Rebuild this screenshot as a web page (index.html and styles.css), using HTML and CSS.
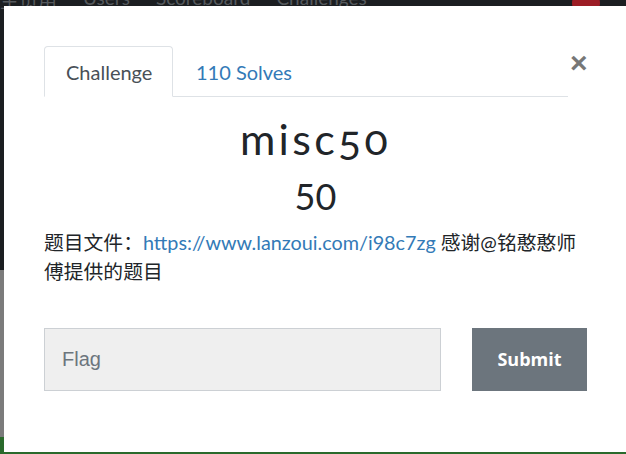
FILE: index.html
```html
<!DOCTYPE html>
<html>
<head>
<meta charset="utf-8">
<link rel="stylesheet" href="styles.css">
</head>
<body>
<div class="page">
  <div class="navbar">
    <span class="nav-item">主页用</span>
    <span class="nav-item">Users</span>
    <span class="nav-item">Scoreboard</span>
    <span class="nav-item">Challenges</span>
    <span class="nav-spacer"></span>
    <span class="badge"></span>
  </div>
  <div class="dark-area"></div>
  <div class="gray-area"></div>
  <div class="green-area"></div>
</div>

<div class="modal">
  <div class="modal-body">
    <div class="header">
      <div class="tabs">
        <div class="tab active">Challenge</div>
        <div class="tab link">110 Solves</div>
      </div>
      <div class="close">&times;</div>
    </div>
    <h3 class="title">misc50</h3>
    <h4 class="value">50</h4>
    <p class="desc">题目文件：<a class="link-text">https://www.lanzoui.com/i98c7zg</a> 感谢@铭憨憨师傅提供的题目</p>
    <div class="form">
      <div class="input">Flag</div>
      <div class="submit">Submit</div>
    </div>
  </div>
</div>
</body>
</html>
```
FILE: styles.css
```css
html, body {
  margin: 0;
  padding: 0;
  width: 626px;
  height: 454px;
  overflow: hidden;
}
body {
  background: #1b1e21;
  font-family: "Lato", "Noto Sans CJK SC", sans-serif;
  position: relative;
}
.page {
  display: flex;
  flex-direction: column;
  height: 454px;
}
.navbar {
  height: 30px;
  display: flex;
  align-items: flex-start;
  gap: 26px;
  margin-top: -14px;
  font-size: 19px;
  color: #55595d;
}
.nav-spacer { flex: 1; }
.badge {
  width: 28px;
  height: 22px;
  border-radius: 11px;
  background: #9c1d25;
  margin-top: 6px;
  margin-right: 26px;
}
.dark-area {
  height: 254px;
  background: #1b1e21;
}
.gray-area {
  height: 167px;
  background: #7b7b7b;
}
.green-area {
  flex: 1;
  background: #2a6a2c;
}

.modal {
  position: absolute;
  left: 4px;
  top: 6px;
  width: 640px;
  height: 446px;
  background: #fff;
}
.modal-body {
  width: 543px;
  padding: 40px 0 0 40px;
}
.header {
  display: flex;
  align-items: flex-start;
}
.tabs {
  width: 524px;
  height: 51px;
  box-sizing: border-box;
  border-bottom: 1px solid #dee2e6;
  display: flex;
}
.tab {
  height: 51px;
  box-sizing: border-box;
  padding: 12px 21px 0 21px;
  font-size: 20px;
  line-height: 27px;
  border: 1px solid transparent;
  border-radius: 4px 4px 0 0;
}
.tab.active {
  width: 129px;
  color: #495057;
  background: #fff;
  border-color: #dee2e6 #dee2e6 #fff;
}
.tab.link {
  color: #337ab7;
  padding-left: 22px;
}
.close {
  margin-left: 2px;
  margin-top: 2px;
  width: 17px;
  text-align: center;
  font-family: "Liberation Sans", sans-serif;
  font-size: 30px;
  line-height: 30px;
  font-weight: bold;
  color: #777;
}
.title {
  margin: 18px 0 0 0;
  text-align: center;
  font-family: "Lato", sans-serif;
  font-weight: 400;
  font-size: 43px;
  line-height: 48px;
  letter-spacing: 3.3px;
  font-variant-numeric: oldstyle-nums;
  color: #212529;
}
.value {
  margin: 13px 0 0 0;
  text-align: center;
  font-weight: 400;
  font-size: 36px;
  line-height: 40px;
  color: #212529;
}
.desc {
  margin: 12px 0 0 0;
  font-family: "Lato", "Noto Sans CJK SC", sans-serif;
  font-size: 19.8px;
  line-height: 29px;
  color: #212529;
}
.link-text {
  color: #337ab7;
}
.form {
  margin-top: 42px;
  display: flex;
  gap: 31px;
}
.input {
  width: 397px;
  height: 63px;
  box-sizing: border-box;
  background: #efefef;
  border: 1px solid #ccd0d4;
  padding: 0 17px;
  font-family: "Liberation Sans", sans-serif;
  font-size: 20px;
  line-height: 61px;
  color: #6c757d;
}
.submit {
  width: 115px;
  height: 63px;
  background: #6c757d;
  color: #fff;
  font-family: "Open Sans", sans-serif;
  font-weight: 700;
  font-size: 18px;
  line-height: 63px;
  text-align: center;
}
```
